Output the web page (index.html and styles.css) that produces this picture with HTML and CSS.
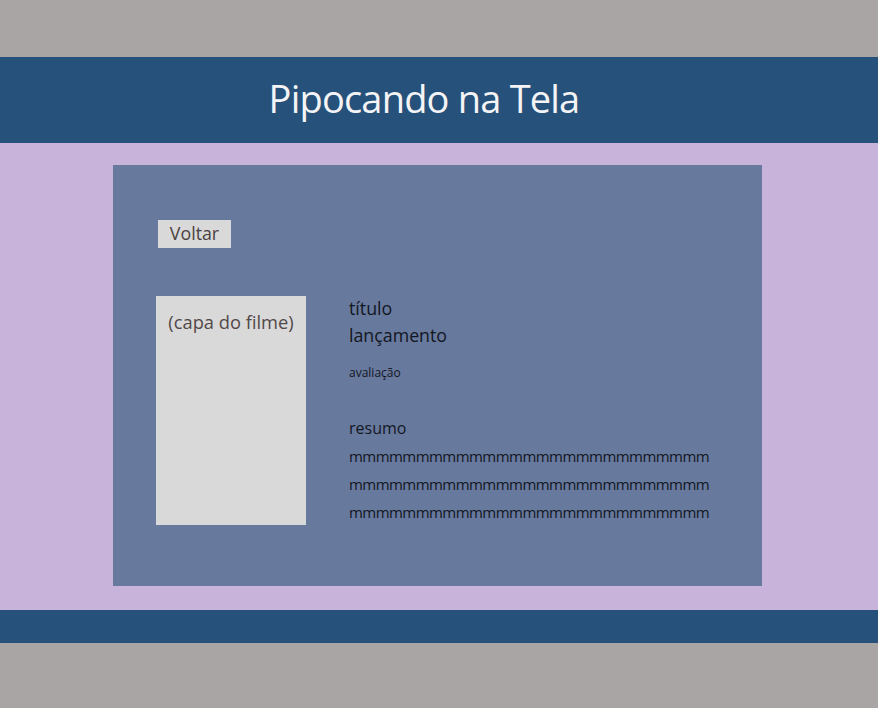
FILE: index.html
```html
<!DOCTYPE html>
<html lang="pt-BR">
<head>
<meta charset="utf-8">
<title>Pipocando na Tela</title>
<link rel="stylesheet" href="styles.css">
</head>
<body>
<div class="top-band"></div>
<header class="site-header">
  <h1 class="site-title">Pipocando na Tela</h1>
</header>
<main class="main">
  <section class="card">
    <div class="card-top">
      <button class="back-btn">Voltar</button>
    </div>
    <div class="movie">
      <div class="poster">(capa do filme)</div>
      <div class="info">
        <div class="info-title">título</div>
        <div class="info-release">lançamento</div>
        <div class="info-rating">avaliação</div>
        <div class="info-summary-label">resumo</div>
        <div class="info-summary">mmmmmmmmmmmmmmmmmmmmmmmmmmm<br>mmmmmmmmmmmmmmmmmmmmmmmmmmm<br>mmmmmmmmmmmmmmmmmmmmmmmmmmm</div>
      </div>
    </div>
  </section>
</main>
<footer class="site-footer"></footer>
<div class="bottom-band"></div>
</body>
</html>
```
FILE: styles.css
```css
* { box-sizing: border-box; }
html, body {
  margin: 0;
  padding: 0;
  height: 100%;
}
body {
  background: #a8a5a4;
  font-family: "Open Sans", "Noto Sans", sans-serif;
  display: flex;
  flex-direction: column;
}
.top-band { height: 57px; flex-shrink: 0; background: #a8a5a4; }
.site-header {
  height: 86px;
  flex-shrink: 0;
  background: #26517a;
  display: flex;
  align-items: center;
  justify-content: center;
  padding: 0 30px 5px 0;
}
.site-title {
  margin: 0;
  font-weight: 400;
  font-size: 38px;
  letter-spacing: -0.8px;
  color: #f4f4f6;
}
.main {
  height: 467px;
  flex-shrink: 0;
  background: #c8b3da;
  padding: 22px 116px 0 113px;
}
.card {
  width: 649px;
  height: 421px;
  background: #68799e;
  padding: 55px 43px 0 43px;
}
.card-top { padding-left: 2px; line-height: 0; }
.back-btn {
  width: 73px;
  height: 28px;
  border: none;
  background: #d9d9d9;
  font-family: inherit;
  font-size: 17.8px;
  line-height: normal;
  color: #4a4242;
  padding: 0 0 3px 0;
  text-align: center;
}
.movie {
  display: flex;
  align-items: flex-start;
  margin-top: 48px;
  gap: 43px;
}
.poster {
  flex-shrink: 0;
  width: 150px;
  height: 229px;
  background: #d9d9d9;
  color: #524848;
  font-size: 18.3px;
  text-align: center;
  padding-top: 13px;
  white-space: nowrap;
}
.info {
  color: #121722;
  margin-top: -1px;
}
.info-title, .info-release { font-size: 17.8px; line-height: 27px; }
.info-rating { font-size: 12px; line-height: 14px; margin-top: 17px; }
.info-summary-label { font-size: 16px; line-height: 28px; margin-top: 34px; }
.info-summary {
  font-size: 15px;
  line-height: 28px;
  letter-spacing: -0.55px;
  white-space: nowrap;
}
.site-footer { height: 33px; flex-shrink: 0; background: #26517a; }
.bottom-band { flex: 1; background: #a8a5a4; }
```
